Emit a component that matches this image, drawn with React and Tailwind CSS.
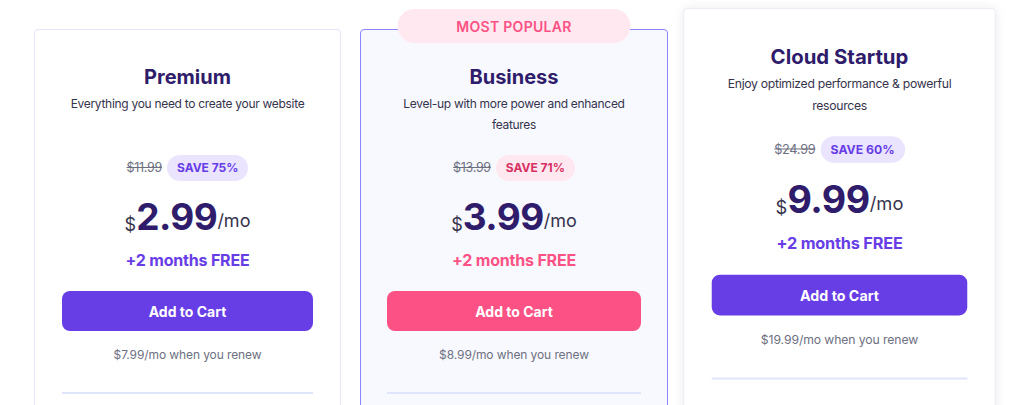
import React from "react";

const plans = [
    {
        name: "Premium",
        desc: "Everything you need to create your website",
        old: "$11.99",
        save: "SAVE 75%",
        price: "2.99",
        renew: "$7.99/mo when you renew",
        tone: "purple",
    },
    {
        name: "Business",
        desc: "Level-up with more power and enhanced features",
        old: "$13.99",
        save: "SAVE 71%",
        price: "3.99",
        renew: "$8.99/mo when you renew",
        tone: "pink",
        popular: true,
    },
    {
        name: "Cloud Startup",
        desc: "Enjoy optimized performance & powerful resources",
        old: "$24.99",
        save: "SAVE 60%",
        price: "9.99",
        renew: "$19.99/mo when you renew",
        tone: "purple",
        raised: true,
    },
];

function PlanCard({ plan }) {
    const pink = plan.tone === "pink";

    let cardClass = "relative w-[307px] mt-[21px] h-[420px] rounded-[4px] border border-[#e4e4fb] bg-white px-[27px]";
    if (plan.popular) {
        cardClass = "relative w-[308px] mt-[21px] h-[420px] rounded-[4px] border border-[#8c85ff] bg-[#f8f9ff] px-[26px]";
    }
    if (plan.raised) {
        // featured card is a little bigger, scaled from the top edge
        cardClass = "relative w-[307px] h-[440px] origin-top scale-[1.018] rounded-[4px] border border-[#ececf5] bg-white px-[27px] shadow-[0_0_10px_rgba(29,30,92,0.08)]";
    }

    return (
        <div className={cardClass}>
            {plan.popular && (
                <div className="absolute -top-[21px] left-1/2 -translate-x-1/2 w-[233px] h-[34px] rounded-full bg-[#ffe8ef] flex items-center justify-center text-[14px] font-semibold tracking-[0.3px] text-[#fc5185]">
                    MOST POPULAR
                </div>
            )}

            <h2 className="pt-[33px] text-center text-[20px] leading-[28px] font-bold text-[#2f1c6a]">
                {plan.name}
            </h2>

            <p className="mt-[2px] min-h-[42px] text-center text-[12px] leading-[21px] tracking-[-0.3px] text-[#36344d]">
                {plan.desc}
            </p>

            <div className="mt-[20px] flex items-center justify-center gap-[5px]">
                <span className="text-[12.5px] tracking-[-0.3px] text-[#6d7081] line-through">
                    {plan.old}
                </span>
                <span
                    className={
                        pink
                            ? "h-[26px] px-[10px] rounded-full bg-[#ffe8ef] text-[#d63163] text-[12px] font-bold flex items-center"
                            : "h-[26px] px-[10px] rounded-full bg-[#ebe4ff] text-[#673de6] text-[12px] font-bold flex items-center"
                    }
                >
                    {plan.save}
                </span>
            </div>

            <div className="mt-[12px] h-[48px] flex items-end justify-center text-[#2f1c6a]">
                <span className="text-[18px] leading-[28px] text-[#36344d] mb-[2px]">$</span>
                <span className="text-[37px] leading-[48px] font-bold tracking-[-0.5px]">
                    {plan.price}
                </span>
                <span className="text-[18px] leading-[28px] text-[#36344d] mb-[6px]">/mo</span>
            </div>

            <div
                className={
                    pink
                        ? "mt-[7px] text-center text-[16px] leading-[24px] font-bold tracking-[-0.2px] text-[#fc5185]"
                        : "mt-[7px] text-center text-[16px] leading-[24px] font-bold tracking-[-0.2px] text-[#673de6]"
                }
            >
                +2 months FREE
            </div>

            <button
                className={
                    pink
                        ? "mt-[19px] w-full h-[40px] rounded-[8px] bg-[#fc5185] text-white text-[14px] font-bold"
                        : "mt-[19px] w-full h-[40px] rounded-[8px] bg-[#673de6] text-white text-[14px] font-bold"
                }
            >
                Add to Cart
            </button>

            <div className="mt-[15px] text-center text-[12px] leading-[18px] tracking-[-0.1px] text-[#6d7081]">
                {plan.renew}
            </div>

            <div className="mt-[28px] h-[2px] bg-[#dfe5fb]" />
        </div>
    );
}

export default function App() {
    return (
        <div
            className="w-[1024px] h-[405px] overflow-hidden bg-white"
            style={{ fontFamily: "Inter, 'Noto Sans', sans-serif" }}
        >
            <div className="flex items-start pt-[8px] pl-[34px]">
                <PlanCard plan={plans[0]} />
                <div className="w-[19px]" />
                <PlanCard plan={plans[1]} />
                <div className="w-[18px]" />
                <PlanCard plan={plans[2]} />
            </div>
        </div>
    );
}
